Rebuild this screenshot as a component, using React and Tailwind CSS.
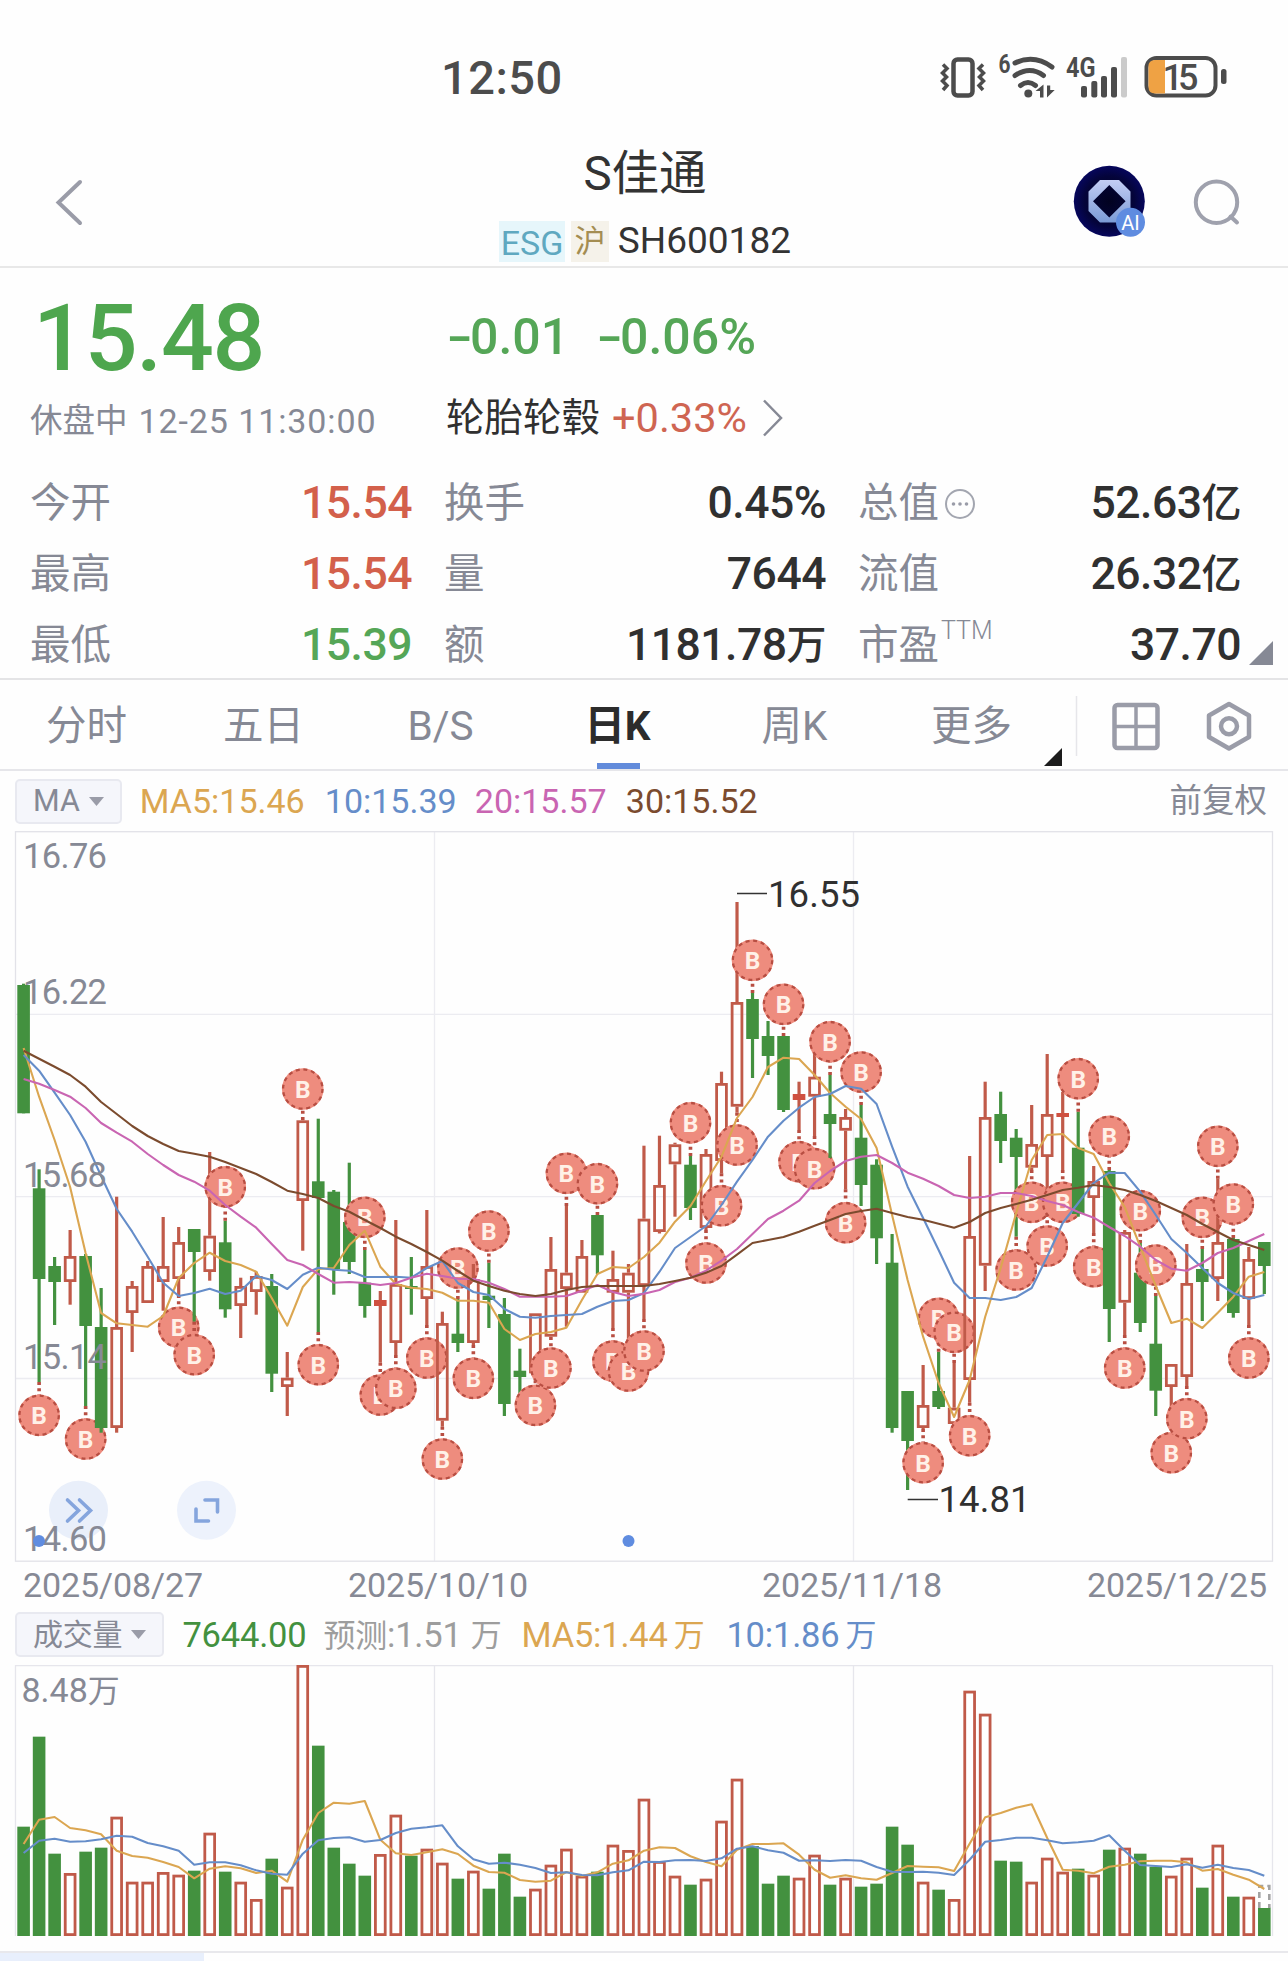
const STEP = 15.509
const cx = (i) => 23.6 + i * STEP

// [direction, wick top, body top, body bottom, wick bottom]
const candles = [
  ["g", 983.7, 985, 1113.3, 1113.3], ["g", 1169.3, 1188.3, 1279, 1382], ["g", 1257, 1266, 1282, 1325],
  ["r", 1230, 1256, 1282, 1304.7], ["g", 1254, 1256, 1326, 1406], ["g", 1288, 1327, 1428, 1432.7],
  ["r", 1196.7, 1327, 1428, 1432.7], ["r", 1281, 1286, 1313, 1352], ["r", 1261, 1266, 1303, 1303],
  ["r", 1217, 1266, 1282, 1310.7], ["r", 1227, 1242, 1279, 1295], ["g", 1229, 1229, 1252, 1321.7],
  ["r", 1152, 1235.7, 1272, 1280.7], ["g", 1220.7, 1242.3, 1309.3, 1317.7], ["r", 1277.7, 1286, 1306, 1338],
  ["r", 1271.7, 1276, 1292, 1314.7], ["g", 1274, 1286, 1373.7, 1392], ["r", 1352, 1377.7, 1387, 1416],
  ["r", 1120, 1120.3, 1201, 1250.7], ["g", 1118.7, 1181.3, 1198, 1332], ["g", 1190, 1191.7, 1269, 1294.7],
  ["g", 1162.7, 1222, 1262, 1274], ["g", 1250, 1282.7, 1306, 1317.7], ["r", 1291, 1300, 1306, 1362.7],
  ["r", 1220, 1284, 1343, 1355], ["g", 1257, 1286, 1289, 1314.7], ["r", 1210, 1266, 1299, 1325],
  ["r", 1311.7, 1323, 1420.7, 1426.7], ["g", 1299, 1333.7, 1343, 1352], ["r", 1264, 1279, 1343, 1345],
  ["g", 1262.7, 1295.7, 1300, 1328], ["g", 1298, 1314, 1404, 1416], ["g", 1348.7, 1370.7, 1377, 1393],
  ["r", 1313.3, 1313.3, 1373.3, 1374], ["r", 1237, 1269, 1336.7, 1337], ["r", 1206, 1272.7, 1289, 1326.7],
  ["r", 1240, 1256, 1292.7, 1292.7], ["g", 1215, 1215, 1255.3, 1274], ["r", 1250.7, 1279, 1292.7, 1328],
  ["r", 1264, 1272.7, 1292.7, 1339], ["r", 1145.7, 1218.7, 1286, 1319], ["r", 1135.7, 1185, 1232, 1233.5],
  ["r", 1142.7, 1144.3, 1164.3, 1216.7], ["g", 1156, 1164.7, 1208, 1220], ["r", 1149, 1154, 1228, 1230],
  ["r", 1071.7, 1083, 1161, 1173.3], ["r", 902, 1002, 1106.7, 1112.7], ["g", 993, 999, 1039, 1078],
  ["g", 1021, 1036, 1056, 1075], ["g", 1036, 1036, 1110, 1112], ["r", 1081.7, 1094, 1100, 1130],
  ["r", 1053, 1076.7, 1096.7, 1136], ["g", 1075, 1114, 1124, 1158], ["r", 1109, 1117, 1130.7, 1189.3],
  ["g", 1105, 1137.7, 1185, 1206], ["g", 1159.3, 1164.7, 1238.3, 1264], ["g", 1234, 1262.7, 1428, 1432.7],
  ["g", 1391, 1391, 1441, 1490], ["r", 1365, 1405, 1428, 1429], ["g", 1351.7, 1391, 1407, 1409],
  ["r", 1363, 1407.7, 1424, 1424], ["r", 1156, 1236, 1380, 1402.7], ["r", 1081.7, 1117, 1265.7, 1291],
  ["g", 1091.7, 1114, 1141, 1163], ["g", 1129, 1137.7, 1157, 1236.7], ["r", 1105, 1144, 1167.7, 1170],
  ["r", 1054, 1114, 1157, 1214], ["r", 1092, 1113, 1117, 1170], ["g", 1111.7, 1147.7, 1214, 1216.7],
  ["r", 1166, 1181, 1198, 1233], ["g", 1170, 1171, 1309, 1342], ["r", 1230, 1232, 1302.7, 1335],
  ["g", 1243, 1272.7, 1323, 1332], ["g", 1296, 1343.7, 1390.7, 1416], ["r", 1364, 1364, 1387, 1421],
  ["r", 1244, 1283, 1377, 1386], ["g", 1249, 1269, 1282, 1321], ["r", 1178.7, 1242, 1279, 1301],
  ["g", 1238, 1239, 1313, 1317.7], ["r", 1247, 1259, 1299, 1325], ["g", 1242, 1242, 1266, 1294],
]

// candle index -> centre of its buy marker
const markers = {
  1: 1415.3, 4: 1439, 10: 1327.3, 11: 1354.7, 13: 1186.7, 18: 1089, 19: 1364.7, 22: 1217.3, 23: 1395,
  24: 1388.3, 26: 1358, 27: 1459, 28: 1268, 29: 1378.3, 30: 1231, 33: 1405.3, 34: 1368, 35: 1173.3,
  37: 1183.7, 38: 1361, 39: 1371, 40: 1351, 43: 1122.7, 44: 1263, 45: 1205.7, 46: 1145, 47: 960.3,
  49: 1004.3, 50: 1161.7, 51: 1168.7, 52: 1041.7, 53: 1222.7, 54: 1072, 58: 1462.7, 59: 1318.3,
  60: 1332.3, 61: 1435.7, 64: 1270, 65: 1202.3, 66: 1246, 67: 1202.3, 68: 1078.7, 69: 1266.7,
  70: 1136.3, 71: 1368, 72: 1210.7, 73: 1265, 74: 1452.7, 75: 1418.7, 76: 1217.3, 77: 1146.3,
  78: 1204, 79: 1358,
}

const priceLines = [
  {
    color: "#dba651",
    y: [
      1048, 1096.7, 1140, 1187, 1253, 1313, 1323.3, 1325, 1326.7, 1316, 1278, 1263, 1252.7, 1261, 1265,
      1271.7, 1298, 1325.7, 1287, 1269, 1268, 1245, 1230.7, 1266.7, 1284, 1287.7, 1289, 1292.7, 1300.7,
      1300.7, 1302.7, 1329, 1340, 1334, 1332, 1327.7, 1300, 1274, 1267, 1268, 1257, 1242.7, 1221.7, 1206,
      1181, 1156.7, 1118, 1097, 1067, 1057.7, 1059, 1075, 1093, 1106.7, 1119, 1148, 1215, 1280, 1336.7,
      1383, 1417, 1380, 1316.7, 1268, 1213, 1160, 1135, 1134, 1148, 1154, 1183, 1207, 1246.7, 1286, 1323,
      1318.7, 1328, 1312.7, 1296.7, 1276.7, 1272,
    ],
  },
  {
    color: "#658dc9",
    y: [
      1055, 1070.7, 1092.7, 1115, 1141.7, 1176, 1209, 1231.7, 1256.7, 1282.7, 1296, 1293, 1288.7, 1294,
      1290.7, 1276, 1280, 1289, 1274.7, 1267.7, 1269.7, 1270.7, 1277, 1277, 1276.7, 1277.7, 1268, 1261,
      1283, 1292, 1295, 1309, 1316.7, 1317.7, 1316, 1315, 1314, 1306.7, 1301, 1300, 1293, 1271.7, 1248,
      1237, 1226, 1205, 1181.7, 1160, 1136.7, 1120.7, 1107.7, 1097, 1094, 1086, 1088.7, 1104, 1146.7,
      1186.7, 1218, 1250, 1282.7, 1298, 1298, 1300, 1297, 1288, 1256.7, 1223, 1203, 1183, 1172.7, 1173,
      1191.7, 1215, 1239, 1253, 1268, 1283, 1293, 1299, 1295,
    ],
  },
  {
    color: "#c965b2",
    y: [
      1079, 1083.7, 1090, 1096.7, 1108, 1123, 1132.7, 1141.7, 1154, 1165, 1175, 1181.7, 1190.7, 1205,
      1216.7, 1227.7, 1244, 1260, 1265, 1274, 1282.7, 1282, 1283, 1285, 1283, 1277.7, 1273.7, 1276,
      1278.7, 1279, 1282.7, 1289, 1296.7, 1296.7, 1296.7, 1296, 1290.7, 1285, 1292, 1296, 1293.7, 1290,
      1282, 1277.7, 1270.7, 1260.7, 1249, 1234, 1219, 1210.7, 1200.7, 1183, 1171, 1161, 1156.7, 1155,
      1163, 1172.7, 1178.7, 1186, 1195, 1198, 1196.7, 1193, 1193, 1196, 1201, 1205, 1212, 1217.7, 1227,
      1236, 1246.7, 1260, 1268.7, 1270.7, 1263, 1253, 1248, 1241, 1234,
    ],
  },
  {
    color: "#7b4b2e",
    y: [
      1050.7, 1058.7, 1066.7, 1075, 1086.7, 1102, 1114, 1126, 1136, 1144, 1151, 1153.7, 1156.7, 1162,
      1168, 1174, 1182, 1190.7, 1194, 1198, 1206, 1211.7, 1220, 1228, 1236.7, 1244, 1252, 1260.7, 1271,
      1280.7, 1286, 1290.7, 1294, 1296, 1294, 1290, 1287, 1286, 1286, 1286, 1286, 1284, 1281, 1277.7,
      1272.7, 1266, 1254.7, 1243, 1240, 1237, 1231.7, 1225.7, 1220, 1214, 1211, 1208.7, 1213, 1217,
      1219.7, 1223.7, 1227.7, 1222, 1213, 1208, 1204, 1199.7, 1195, 1190, 1187.7, 1185, 1187, 1190, 1195,
      1201, 1208, 1215, 1224, 1232, 1240, 1245, 1250,
    ],
  },
]

// volume series are kept in thirds of a pixel, plot spans 316 (8.48万) to 1128 (0)
const volY = (v) => (v - 316) / 3

const volumes = [
  801, 531, 882, 940, 876, 864, 771, 966, 966, 937, 945, 933, 819, 936, 966, 1018, 897, 981, 316, 558,
  864, 912, 948, 883, 765, 888, 867, 909, 957, 933, 987, 882, 1011, 987, 915, 867, 948, 936, 855, 871,
  717, 904, 948, 975, 957, 783, 657, 859, 972, 948, 954, 885, 975, 954, 981, 972, 801, 855, 966, 990,
  1018, 393, 462, 903, 906, 966, 894, 936, 927, 945, 870, 864, 882, 921, 948, 894, 984, 855, 1011, 1011,
  1044,
]

const volumeLines = [
  {
    color: "#dba651",
    y: [
      853, 780, 772, 805, 812, 824, 873, 889, 894, 907, 922, 956, 927, 920, 926, 940, 933, 966, 840, 760,
      729, 732, 724, 840, 881, 886, 878, 869, 883, 918, 937, 939, 961, 966, 963, 937, 949, 938, 912, 902,
      873, 863, 865, 890, 907, 920, 870, 853, 853, 851, 885, 930, 954, 947, 956, 960, 940, 919, 921, 923,
      934, 852, 773, 760, 744, 734, 835, 930, 933, 941, 921, 915, 905, 903, 903, 908, 933, 928, 945, 960,
      988,
    ],
  },
  {
    color: "#658dc9",
    y: [
      880, 843, 837, 846, 845, 839, 828, 831, 850, 860, 873, 915, 908, 908, 917, 932, 942, 945, 882, 842,
      835, 833, 846, 841, 820, 807, 803, 797, 860, 899, 912, 909, 915, 925, 940, 938, 946, 947, 938, 932,
      906, 907, 902, 901, 904, 896, 867, 860, 872, 879, 903, 902, 904, 901, 903, 922, 936, 937, 936, 939,
      946, 900, 846, 841, 834, 834, 842, 851, 848, 843, 827, 873, 916, 919, 922, 914, 924, 915, 925, 931,
      948,
    ],
  },
]

const axisLabels = [
  ["16.76", 868],
  ["16.22", 1003.5],
  ["15.68", 1187],
  ["15.14", 1368.5],
  ["14.60", 1550.5],
]

const tabs = ["分时", "五日", "B/S", "日K", "周K", "更多"]

const stats = [
  [
    { label: "今开", value: "15.54", color: "text-[#d3604b]" },
    { label: "换手", value: "0.45%", color: "text-[#303030]" },
    { label: "总值", value: "52.63", unit: "亿", color: "text-[#303030]", info: true },
  ],
  [
    { label: "最高", value: "15.54", color: "text-[#d3604b]" },
    { label: "量", value: "7644", color: "text-[#303030]" },
    { label: "流值", value: "26.32", unit: "亿", color: "text-[#303030]" },
  ],
  [
    { label: "最低", value: "15.39", color: "text-[#55a657]" },
    { label: "额", value: "1181.78", unit: "万", color: "text-[#303030]" },
    { label: "市盈", sup: "TTM", value: "37.70", color: "text-[#303030]" },
  ],
]

function StatusBar() {
  return (
    <div className="flex h-[124px] items-start pt-[50px]">
      <div className="ml-[441px] h-[54px] w-[494px] text-[47px] leading-[56px] font-medium tracking-[0.5px] text-[#4c4c4c]">
        12:50
      </div>
      <svg width="300" height="54" viewBox="935 50 300 54" fill="none">
        <rect x="953.5" y="59.5" width="19" height="36" rx="4" stroke="#4c4c4c" strokeWidth="4.5" />
        <path
          d="M943 64.500l4 4-4.500 4.500 4 4-4 4 4.500 4.500-4 4.500M983 64.500l-4 4 4.500 4.500-4 4 4 4-4.500 4.500 4 4.500"
          stroke="#4c4c4c"
          strokeWidth="3.500"
        />
        <text x="998.5" y="72.500" fontSize="25" fontWeight="700" fill="#4c4c4c" textLength="12" lengthAdjust="spacingAndGlyphs">
          6
        </text>
        <path
          d="M1015 63q19-9 37 4M1015 75.500q15-10 28.500 0M1020.500 85.500q7.500-6 15 0"
          stroke="#4c4c4c"
          strokeWidth="5"
          strokeLinecap="round"
        />
        <circle cx="1028.300" cy="93.500" r="4" fill="#4c4c4c" />
        <path d="M1043.500 84.500v13h-3.500v-6.500h-4.500zM1047 97.500v-12h3.200v4.500h4.500z" fill="#4c4c4c" />
        <text x="1066" y="76.500" fontSize="28" fontWeight="700" fill="#4c4c4c" textLength="29.5" lengthAdjust="spacingAndGlyphs">
          4G
        </text>
        <g fill="#4c4c4c">
          <rect x="1081" y="86" width="6" height="11.500" rx="2" />
          <rect x="1091.300" y="81" width="6" height="16.500" rx="2" />
          <rect x="1101" y="76" width="6" height="21.500" rx="2" />
          <rect x="1111" y="67" width="6" height="30.500" rx="2" />
        </g>
        <rect x="1121" y="57" width="6" height="40.500" rx="2" fill="#cbcbcb" />
        <rect x="1146.500" y="58" width="69" height="37.500" rx="10" stroke="#4c4c4c" strokeWidth="4" />
        <path d="M1165 60v33.500h-10q-6.500 0-6.500-6.500v-20.500q0-6.500 6.500-6.500z" fill="#efa244" />
        <rect x="1221" y="69" width="5.500" height="15" rx="2.500" fill="#4c4c4c" />
        <text x="1162.500" y="89.500" fontSize="36" fontWeight="500" fill="#4c4c4c" textLength="36">15</text>
      </svg>
    </div>
  )
}

function Header() {
  return (
    <header className="flex h-[144px] border-b-2 border-[#e8e8e8]">
      <svg width="499" height="142" viewBox="0 124 499 142" fill="none">
        <path d="M80 182L58.500 202.500L80 223" stroke="#9a9ca8" strokeWidth="4" strokeLinecap="round" />
      </svg>
      <div className="flex w-[292px] flex-col items-center">
        <h1 className="mt-[20px] text-[47.5px] leading-[60px] text-[#333333]">S佳通</h1>
        <div className="mt-[16px] flex h-[42px] w-full items-center">
          <span className="h-[41px] w-[67px] bg-[#e6f6fb] text-center text-[34px] leading-[45px] text-[#5fa8c0]">ESG</span>
          <span className="ml-[6px] h-[41px] w-[38px] bg-[#f5f2ea] text-center text-[31px] leading-[41px] text-[#a48d52]">沪</span>
          <span className="ml-[9px] text-[37px] leading-[40px] whitespace-nowrap text-[#333333]">SH600182</span>
        </div>
      </div>
      <svg width="497" height="142" viewBox="791 124 497 142" fill="none">
        <defs>
          <radialGradient id="logo-bg">
            <stop offset="0" stopColor="#020220" />
            <stop offset="0.700" stopColor="#04043a" />
            <stop offset="1" stopColor="#06065c" />
          </radialGradient>
          <linearGradient id="logo-ring" x1="0" y1="0" x2="0" y2="1">
            <stop offset="0" stopColor="#c3cdf4" />
            <stop offset="1" stopColor="#7b9bd6" />
          </linearGradient>
        </defs>
        <circle cx="1109.300" cy="201.300" r="35.500" fill="url(#logo-bg)" />
        <path
          d="M1100 180h19l11.500 11.500v19.500l-11.500 11.500h-19l-11.500-11.500v-19.500zM1109.300 185l-16.300 16.300 16.300 16.300 16.300-16.300z"
          fill="url(#logo-ring)"
          fillRule="evenodd"
        />
        <circle cx="1130.500" cy="222.300" r="14.500" fill="#5f8ce0" />
        <text x="1130.500" y="229.500" fontSize="20" fill="#ffffff" textAnchor="middle">AI</text>
        <circle cx="1216.500" cy="202.300" r="20.700" stroke="#9fa1ad" strokeWidth="4" />
        <path d="M1230.500 216.500L1237 222.500" stroke="#9fa1ad" strokeWidth="4" strokeLinecap="round" />
      </svg>
    </header>
  )
}

function Stat({ item }) {
  return (
    <div className="flex items-center justify-between">
      <div className="flex items-center text-[40.5px] text-[#868995]">
        {item.label}
        {item.info && (
          <svg className="ml-[5px]" width="32" height="32" viewBox="0 0 32 32" fill="none">
            <circle cx="16" cy="16" r="14" stroke="#a3a6b0" strokeWidth="2" />
            <g fill="#9a9ca8">
              <circle cx="9.500" cy="16" r="1.800" />
              <circle cx="16" cy="16" r="1.800" />
              <circle cx="22.500" cy="16" r="1.800" />
            </g>
          </svg>
        )}
        {item.sup && <span className="mb-[30px] ml-[2px] text-[25px] leading-none font-light">{item.sup}</span>}
      </div>
      <div className={`flex items-center text-[44.5px] font-medium tracking-[-0.5px] ${item.color}`}>
        {item.value}
        {item.unit && <span className="text-[40px]">{item.unit}</span>}
      </div>
    </div>
  )
}

function Minus() {
  return <span className="mr-[6px] inline-block origin-left scale-x-150">-</span>
}

function Quote() {
  return (
    <section className="relative h-[412px] border-b-2 border-[#e4e4e6]">
      <div className="flex h-[112px] items-end">
        <div className="h-[87px] w-[447px] pl-[33px] text-[93px] leading-[92px] font-medium tracking-[-1.2px] text-[#4ea64e]">
          15.48
        </div>
        <div className="flex pb-[11px] text-[50px] leading-[64px] font-medium text-[#55a657]">
          <span className="w-[150px]">
            <Minus />
            0.01
          </span>
          <span>
            <Minus />
            0.06%
          </span>
        </div>
      </div>
      <div className="flex h-[82px] items-center pt-[1px]">
        <div className="flex w-[446px] items-center pl-[30px] text-[34px] text-[#868995]">
          <span className="text-[32.5px]">休盘中</span>
          <span className="ml-[11px] tracking-[0.9px]">12-25 11:30:00</span>
        </div>
        <div className="flex items-center pb-[7px]">
          <span className="text-[38.5px] text-[#303030]">轮胎轮毂</span>
          <span className="ml-[12px] text-[41.5px] text-[#cf6552]">+0.33%</span>
          <svg className="ml-[15px]" width="22" height="40" viewBox="0 0 22 40" fill="none">
            <path d="M2 2.500L19 20L2 37.500" stroke="#868995" strokeWidth="2.500" />
          </svg>
        </div>
      </div>
      <div className="flex flex-col pt-[6px]">
        {stats.map((row, i) => (
          <div key={i} className="grid h-[71px] grid-cols-[382px_382px_383px] gap-x-[32px] pl-[30px]">
            {row.map((item) => (
              <Stat key={item.label} item={item} />
            ))}
          </div>
        ))}
      </div>
      <svg className="absolute right-[15px] bottom-[13px]" width="24" height="24" viewBox="0 0 24 24">
        <path d="M24 0V24H0z" fill="#868995" />
      </svg>
    </section>
  )
}

function PeriodTabs() {
  return (
    <nav className="flex h-[91px] border-b-2 border-[#e6e6ea]">
      <div className="relative flex w-[1062px]">
        {tabs.map((tab) => {
          const active = tab === "日K"
          return (
            <div
              key={tab}
              className={`relative flex w-[177px] items-center justify-center pt-[4px] pr-[4px] text-[40.5px] ${
                active ? "font-bold text-[#2c2c2c]" : "text-[#868995]"
              }`}
            >
              {tab}
              {active && <span className="absolute bottom-0 left-[66px] h-[6px] w-[43px] bg-[#628bdb]" />}
            </div>
          )
        })}
        <svg className="absolute right-0 bottom-[3px]" width="18" height="18" viewBox="0 0 18 18">
          <path d="M18 0V18H0z" fill="#1c1c1c" />
        </svg>
      </div>
      <svg width="226" height="89" viewBox="1062 680 226 89" fill="none">
        <path d="M1076.500 696V756" stroke="#e6e6ea" strokeWidth="1.500" />
        <g stroke="#9a9ca8" strokeWidth="4.500">
          <rect x="1114.500" y="705" width="43" height="43" rx="3" />
          <path d="M1136 705V748M1114.500 726.500H1157.500" strokeWidth="3.500" />
          <path d="M1229 704L1249 715.500V737L1229 748.500L1209 737V715.500z" strokeLinejoin="round" />
          <circle cx="1229" cy="726.300" r="8" />
        </g>
      </svg>
    </nav>
  )
}

function Chip({ children }) {
  return (
    <div className="flex h-[45px] items-center gap-[9px] rounded-[5px] border-2 border-[#e8e9f0] bg-[#f5f6fb] px-[16px] text-[#868995]">
      {children}
      <svg width="15" height="9" viewBox="0 0 15 9">
        <path d="M0 0H15L7.500 9z" fill="#9a9ca8" />
      </svg>
    </div>
  )
}

function MaLegend() {
  return (
    <div className="flex h-[60px] items-center pl-[15px] text-[34px]">
      <Chip>
        <span className="text-[30.500px] leading-none">MA</span>
      </Chip>
      <span className="ml-[18px] w-[185px] pt-[1px] text-[#dba651]">MA5:15.46</span>
      <span className="w-[150px] pt-[1px] text-[#658dc9]">10:15.39</span>
      <span className="w-[151px] pt-[1px] text-[#c965b2]">20:15.57</span>
      <span className="pt-[1px] text-[#7b4b2e]">30:15.52</span>
      <span className="ml-auto pt-[1px] pr-[21px] text-[32.500px] text-[#868995]">前复权</span>
    </div>
  )
}

function Candle({ i, data }) {
  const [dir, high, top, bottom, low] = data
  const x = cx(i)
  if (dir === "g") {
    return (
      <g fill="#43913f">
        <rect x={x - 1.6} y={high} width="3.200" height={low - high} />
        <rect x={x - 6.3} y={top} width="12.600" height={bottom - top} />
      </g>
    )
  }
  const h = bottom - top
  return (
    <g fill="#c05a49">
      <rect x={x - 1.6} y={high} width="3.200" height={top - high} />
      <rect x={x - 1.6} y={bottom} width="3.200" height={low - bottom} />
      {h < 7 ? (
        <rect x={x - 6.3} y={top} width="12.600" height={h} fill="#cf5040" />
      ) : (
        <rect x={x - 4.9} y={top + 1.4} width="9.800" height={h - 2.8} fill="none" stroke="#c05a49" strokeWidth="2.800" />
      )}
    </g>
  )
}

function Marker({ i, y, data }) {
  const x = cx(i)
  const below = y > data[2]
  const from = below ? data[4] : data[1]
  return (
    <g>
      <path d={`M${x} ${from}V${below ? y - 20 : y + 20}`} stroke="#b84e42" strokeWidth="3.600" strokeDasharray="3 3.300" />
      <circle cx={x} cy={y} r="20.800" fill="#ee8c7e" />
      <circle cx={x} cy={y} r="19.700" fill="none" stroke="#b84e42" strokeWidth="2.300" strokeDasharray="4 3.740" />
      <text x={x} y={y + 9} fontSize="24.500" fontWeight="700" fill="#fff1e8" textAnchor="middle">
        B
      </text>
    </g>
  )
}

function SeriesLine({ color, y, scale }) {
  const points = y.map((v, i) => `${cx(i).toFixed(1)},${scale ? scale(v).toFixed(1) : v}`).join(" ")
  return <polyline points={points} fill="none" stroke={color} strokeWidth="2.100" strokeLinejoin="round" />
}

function PriceChart() {
  return (
    <svg width="1288" height="731" viewBox="0 831 1288 731" className="block">
      <g stroke="#ececf1" strokeWidth="1.300" fill="none">
        <path d="M16 1014.300H1272M16 1196.600H1272M16 1378.500H1272M434.500 832V1561M853.500 832V1561" />
        <rect x="15.500" y="831.700" width="1257" height="729.500" stroke="#e2e2e8" />
      </g>
      <circle cx="78.500" cy="1510.300" r="29.500" fill="#e9effa" />
      <circle cx="206.500" cy="1510.300" r="29.500" fill="#edf2fc" />
      <g stroke="#85a5dd" strokeWidth="3.600" fill="none" strokeLinecap="round">
        <path d="M67.500 1500L78.500 1510.500L67.500 1521M79.500 1500L90.500 1510.500L79.500 1521" />
        <path d="M205 1500H217.500V1512M196 1509V1521H208.500" />
      </g>
      {candles.map((c, i) => (
        <g key={i}>
          <Candle i={i} data={c} />
          {markers[i] && <Marker i={i} y={markers[i]} data={c} />}
        </g>
      ))}
      {priceLines.map((line) => (
        <SeriesLine key={line.color} {...line} />
      ))}
      <g fontSize="34.500" fill="#868995">
        {axisLabels.map(([label, y]) => (
          <text key={label} x="23" y={y} textLength="84">
            {label}
          </text>
        ))}
      </g>
      <circle cx="39" cy="1541" r="6" fill="#5f8ce0" />
      <circle cx="628.500" cy="1541" r="6" fill="#5f8ce0" />
      <path d="M737 893.500H767M907.700 1499.500H938" stroke="#333333" strokeWidth="1.300" />
      <g fontSize="36.500" fill="#303030">
        <text x="768" y="906.500" textLength="92">16.55</text>
        <text x="938.500" y="1512" textLength="92">14.81</text>
      </g>
    </svg>
  )
}

function VolumeChart() {
  return (
    <svg width="1288" height="272" viewBox="0 0 1288 272" className="block">
      <path
        d="M15.500 271V0.700H1272.500V271M434.500 1V271M853.500 1V271"
        stroke="#e6e6ec"
        strokeWidth="1.300"
        fill="none"
      />
      <text x="21.500" y="36.500" fontSize="34" fill="#868995">
        8.48<tspan fontSize="32">万</tspan>
      </text>
      {volumes.map((v, i) =>
        candles[i][0] === "g" ? (
          <rect key={i} x={cx(i) - 6.3} y={volY(v)} width="12.600" height={271 - volY(v)} fill="#43913f" />
        ) : (
          <rect
            key={i}
            x={cx(i) - 4.9}
            y={volY(v) + 1.4}
            width="9.800"
            height={268.2 - volY(v)}
            fill="#ffffff"
            stroke="#c05a49"
            strokeWidth="2.800"
          />
        ),
      )}
      <path
        d={`M${cx(80) - 5} 243V221H${cx(80) + 5}V243`}
        fill="#ffffff"
        stroke="#a3a3a3"
        strokeWidth="2.600"
        strokeDasharray="6 4"
      />
      {volumeLines.map((line) => (
        <SeriesLine key={line.color} {...line} scale={volY} />
      ))}
    </svg>
  )
}

function App() {
  return (
    <div className="h-[1961px] w-[1288px] overflow-hidden bg-[#fefefe] font-['Roboto','Noto_Sans_CJK_SC',sans-serif] whitespace-nowrap">
      <StatusBar />
      <Header />
      <Quote />
      <PeriodTabs />
      <MaLegend />
      <PriceChart />
      <div className="flex h-[46px] items-center pl-[23px] text-[34px] tracking-[-0.1px] text-[#868995]">
        <span className="w-[325px]">2025/08/27</span>
        <span className="w-[414px]">2025/10/10</span>
        <span className="w-[325px]">2025/11/18</span>
        <span>2025/12/25</span>
      </div>
      <div className="flex h-[57px] items-center pb-[4px] pl-[15px] text-[34.500px] tracking-[-0.2px]">
        <Chip>
          <span className="text-[30px] leading-none">成交量</span>
        </Chip>
        <span className="ml-[18px] w-[141px] pt-[3px] text-[#43913f]">7644.00</span>
        <span className="flex w-[198px] items-center pt-[3px] text-[#9d9d9d]">
          <span className="text-[32px]">预测</span>:1.51<span className="ml-[9px] text-[31px]">万</span>
        </span>
        <span className="flex w-[205px] items-center pt-[3px] text-[#dba651]">
          MA5:1.44<span className="ml-[6px] text-[31px]">万</span>
        </span>
        <span className="flex items-center pt-[3px] text-[#658dc9]">
          10:1.86<span className="ml-[6px] text-[31px]">万</span>
        </span>
      </div>
      <VolumeChart />
      <div className="mt-[14px] h-[10px] border-t-2 border-[#e8e8ec]">
        <div className="h-[8px] w-[204px] bg-[#e8effc]" />
      </div>
    </div>
  )
}

export default App
